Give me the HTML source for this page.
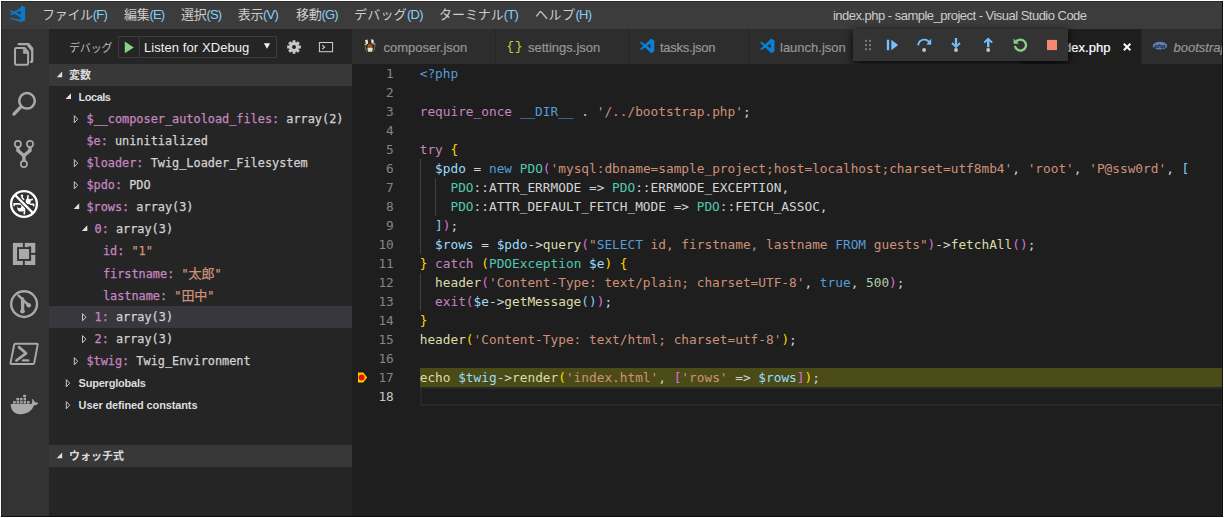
<!DOCTYPE html>
<html lang="ja">
<head>
<meta charset="utf-8">
<title>index.php - sample_project - Visual Studio Code</title>
<style>
*{box-sizing:border-box;margin:0;padding:0}
html,body{width:1224px;height:518px;overflow:hidden;background:#fff}
body{position:relative;font-family:"Liberation Sans","Noto Sans CJK JP",sans-serif;font-size:13px;color:#ccc;-webkit-font-smoothing:antialiased}
.abs{position:absolute}
#win{position:absolute;left:1px;top:1px;width:1222px;height:516px;background:#1e1e1e;overflow:hidden}
#edge-l{position:absolute;left:1px;top:1px;width:1px;height:516px;background:rgba(0,0,0,0.3)}
#edge-t{position:absolute;left:1px;top:1px;width:1222px;height:1px;background:rgba(0,0,0,0.3)}
#edge-r{position:absolute;left:1222px;top:1px;width:1px;height:516px;background:#0e0e0e}
#edge-b{position:absolute;left:1px;top:516px;width:1222px;height:1px;background:#0e0e0e}
/* title bar */
#title{position:absolute;left:0;top:0;width:1222px;height:28px;background:#3c3c3c}
#title .mi{position:absolute;top:0;height:28px;line-height:27px;font-size:13px;color:#ccc;white-space:nowrap}
#title .j{letter-spacing:-0.3px}#title .l{letter-spacing:-0.8px}
#wtitle{position:absolute;top:0.5px;height:28px;line-height:28px;font-size:13px;letter-spacing:-0.52px;color:#ccc;white-space:nowrap}
/* activity bar */
#act{position:absolute;left:0;top:28px;width:48px;height:488px;background:#333}
#act svg{position:absolute;left:0;top:0}
/* sidebar */
#side{position:absolute;left:48px;top:28px;width:303px;height:488px;background:#252526}
.shead{position:absolute;left:0;width:303px;height:22px;background:#383838;font-size:11px;font-weight:bold;color:#ddd;line-height:22px}
.row{position:absolute;left:0;width:303px;height:22px;line-height:22px;white-space:pre}
.row.sel{background:#37373d}
.mono{font-family:"DejaVu Sans Mono","Liberation Mono",monospace;font-size:11.86px;letter-spacing:0;-webkit-text-stroke:0.25px}
.row .t{position:absolute;top:0;height:22px;line-height:22px;white-space:pre}
.vn{color:#c586c0}.vv{color:#d2d2d2}.vs{color:#ce9178}
.cj{font-family:"Noto Sans CJK JP",sans-serif;font-size:13px;letter-spacing:-0.1px}
.bold{font-weight:bold;font-size:11px;color:#ddd;letter-spacing:-0.22px}
/* tabs */
#tabs{position:absolute;left:351px;top:28px;width:871px;height:35px;background:#252526}
.tab{position:absolute;top:0;height:35px;background:#2d2d2d;color:#969696;font-size:13px;line-height:35px;white-space:nowrap}
.tl{-webkit-text-stroke:0.2px;top:1px;height:35px;line-height:35px;font-size:13px;color:#969696;white-space:nowrap}
/* editor */
#ed{position:absolute;left:351px;top:63px;width:871px;height:453px;background:#1e1e1e}
.ln{position:absolute;left:0;width:41.8px;text-align:right;color:#858585}.ln.cur{color:#c6c6c6}
.cl{position:absolute;left:67.7px;white-space:pre;color:#d4d4d4}
.code{font-family:"DejaVu Sans Mono","Liberation Mono",monospace;font-size:12.79px;line-height:19px;height:19px}
.k{color:#c586c0}.b{color:#569cd6}.s{color:#ce9178}.v{color:#9cdcfe}.t{color:#4ec9b0}.f{color:#dcdcaa}.n{color:#b5cea8}.g{color:#ffd700}.o{color:#da70d6}.l{color:#87cefa}
</style>
</head>
<body>
<div id="win">
  <div id="title">
    <svg class="abs" style="left:7px;top:3px" width="20" height="20" viewBox="8 4 20 20"><g fill="#0a7ad0"><path d="M21.8 5.7 L25.1 7.3 V20.4 L21.5 22.1 L20.7 21.6 V6.5 Z"/><path d="M9.8 10.9 L10.9 9.9 L21 15.1 V17.7 Z"/><path d="M9.8 14.2 L10.9 15.2 L21 10.6 V7.8 Z"/><path d="M9.5 17.8 L20.9 19.6 L21.5 22.1 L10.2 18.7 Z"/></g></svg>
    <div class="mi" style="left:41px"><span class="j">ファイル</span><span class="l">(F)</span></div>
    <div class="mi" style="left:123px"><span class="j">編集</span><span class="l">(E)</span></div>
    <div class="mi" style="left:180px"><span class="j">選択</span><span class="l">(S)</span></div>
    <div class="mi" style="left:236.7px"><span class="j">表示</span><span class="l">(V)</span></div>
    <div class="mi" style="left:295px"><span class="j">移動</span><span class="l">(G)</span></div>
    <div class="mi" style="left:353px"><span class="j" style="letter-spacing:0.25px">デバッグ</span><span class="l">(D)</span></div>
    <div class="mi" style="left:438px"><span class="j" style="letter-spacing:-0.05px">ターミナル</span><span class="l">(T)</span></div>
    <div class="mi" style="left:534px"><span class="j" style="letter-spacing:0.5px">ヘルプ</span><span class="l">(H)</span></div>
    <div id="wtitle" style="left:832px">index.php - sample_project - Visual Studio Code</div>
  </div>
  <div id="act">
    <svg width="48" height="488" viewBox="1 29 48 488">
      <g fill="none" stroke="#a9a9a9" stroke-linecap="round" stroke-linejoin="round">
        <!-- files -->
        <path d="M18.6 44.1 H28.3 L32.2 48.6 V60.4 Q32.2 61.8 30.9 61.8" stroke-width="2.3"/>
        <path d="M16.4 48 H24.6 L28.1 52.2 V63.4 Q28.1 64.8 26.7 64.8 H16.4 Q15 64.8 15 63.4 V49.4 Q15 48 16.4 48 Z" stroke-width="2"/>
        <path d="M23.4 48.6 V53.4 H28 Z" fill="#a9a9a9" stroke-width="0.6"/>
        <path d="M28.6 44.6 L32 48.6 L31 50.4 L27.6 46 Z" fill="#a9a9a9" stroke-width="0.6"/>
        <!-- search -->
        <circle cx="27" cy="100.8" r="7.8" stroke-width="2.5"/>
        <path d="M20.9 106.9 L13.9 114.2" stroke-width="3.2"/>
        <!-- git -->
        <path d="M17.9 146 V150.4 L23.9 155.8 L30 150.4 V146 M23.9 155.8 V162" stroke-width="3.4" stroke-linecap="butt" stroke-linejoin="miter"/>
        <circle cx="17.9" cy="143.9" r="3.1" stroke-width="1.7" fill="#333"/>
        <circle cx="30" cy="143.9" r="3.1" stroke-width="1.7" fill="#333"/>
        <circle cx="23.9" cy="164" r="3.1" stroke-width="1.7" fill="#333"/>
        <!-- gitlens -->
        <circle cx="24.1" cy="304.1" r="12.9" stroke-width="2.4"/>
        <path d="M18.6 295.6 L22.3 299.2 M22.8 299.8 L28.6 305.2" stroke-width="2.5"/>
        <path d="M22.6 299 V311" stroke-width="3.3"/>
        <circle cx="22.5" cy="311.2" r="2.3" fill="#a9a9a9" stroke="none"/>
        <circle cx="28.7" cy="305.3" r="2.3" fill="#a9a9a9" stroke="none"/>
        <!-- powershell -->
        <path d="M15.4 343.7 H36.9 Q37.9 343.7 37.7 344.7 L34.2 363 Q34 364 33 364 H11.3 Q10.3 364 10.5 363 L14.2 344.7 Q14.4 343.7 15.4 343.7 Z" stroke-width="1.9"/>
        <path d="M19.1 347.2 L26 353.3 L16.4 360.5" stroke-width="2.8"/>
        <path d="M23 360.4 H28.2" stroke-width="2.4"/>
      </g>
      <!-- extensions -->
      <g>
        <rect x="12.9" y="242.9" width="22.4" height="22.1" fill="#a9a9a9"/>
        <rect x="17.1" y="247.1" width="14" height="13.8" fill="#333"/>
        <rect x="19" y="249" width="10.1" height="10" fill="#a9a9a9"/>
        <rect x="22.9" y="242" width="1.9" height="5.2" fill="#333"/>
        <rect x="22.9" y="260.8" width="1.9" height="5" fill="#333"/>
        <rect x="31" y="252.9" width="5" height="1.9" fill="#333"/>
        <rect x="28.3" y="246.4" width="2.8" height="2.9" fill="#333"/>
      </g>
      <!-- docker -->
      <g fill="#a9a9a9">
        <path d="M10.8 404 H31.4 C32.5 402.5 32.4 400.5 31.9 398.7 C33.5 399.7 34.7 401.1 34.9 402.6 C36 402.1 37.3 402.3 38.1 402.9 C37.6 404.5 36 405.4 34 405.3 C32 410.6 27.5 414.2 20.3 414.2 C14 414.2 10.5 410 10.8 404 Z"/>
        <rect x="13.1" y="401.1" width="2.6" height="2.5"/><rect x="16.7" y="401.1" width="2.5" height="2.5"/><rect x="20.2" y="401.1" width="2.4" height="2.5"/><rect x="23.6" y="401.1" width="2.4" height="2.5"/><rect x="27" y="401.1" width="2.6" height="2.5"/>
        <rect x="16.4" y="397.9" width="2.7" height="2.5"/><rect x="20" y="397.9" width="2.5" height="2.5"/><rect x="23.6" y="397.9" width="2.4" height="2.5"/>
        <rect x="23.2" y="394.8" width="2.8" height="2.4"/>
      </g>
      <!-- debug (active) -->
      <g fill="none" stroke="#fff" stroke-linecap="round" stroke-linejoin="round">
        <circle cx="21" cy="207.9" r="3.7" fill="#fff" stroke="none"/>
        <circle cx="19.4" cy="206.3" r="1.9" fill="#333" stroke="none"/>
        <ellipse cx="28.2" cy="201.4" rx="2.5" ry="2.8" fill="#fff" stroke="none"/>
        <path d="M14 203.9 H20.4 M14.2 204 V205.4 M22.2 195.4 V198.2 L23.6 199.4 M21.4 195.6 H22.4 M28 195.8 L27.6 198.6 M30.4 200 L32.2 199.4 M30.4 204.3 H33.6 V205.8 M24.5 208.6 L24.3 213.8" stroke-width="1.6"/>
        <path d="M14.9 194.9 L33.1 213.1" stroke="#333" stroke-width="4.4" stroke-linecap="butt"/>
        <path d="M14.9 194.9 L33.1 213.1" stroke-width="2.2" stroke-linecap="butt"/>
        <circle cx="24" cy="204" r="12.9" stroke-width="2.3"/>
      </g>
    </svg>
  </div>
  <div id="side">
    <div class="abs" style="left:20px;top:1.5px;height:35px;line-height:35px;font-size:11px;letter-spacing:-0.15px;color:#bbb;white-space:nowrap">デバッグ</div>
    <div class="abs" style="left:69px;top:7px;width:159px;height:22px;border:1px solid #3c3c3c"></div>
    <div class="abs" style="left:90px;top:8px;width:1px;height:20px;background:#3c3c3c"></div>
    <div class="abs" id="cfg" style="left:95px;top:1px;letter-spacing:0.08px;height:35px;line-height:35px;font-size:13px;color:#f0f0f0;white-space:nowrap">Listen for XDebug</div>
    <div class="shead" style="top:35px"><span class="abs" style="left:20px">変数</span></div>
    <div class="row" style="top:57px"><div class="t" style="left:29.6px"><span class="bold" style="letter-spacing:-0.5px">Locals</span></div></div>
    <div class="row" style="top:79px"><div class="t" style="left:37.4px"><span class="mono"><span class="vn">$__composer_autoload_files:</span><span class="vv"> array(2)</span></span></div></div>
    <div class="row" style="top:101px"><div class="t" style="left:37.4px"><span class="mono"><span class="vn">$e:</span><span class="vv"> uninitialized</span></span></div></div>
    <div class="row" style="top:123px"><div class="t" style="left:37.4px"><span class="mono"><span class="vn">$loader:</span><span class="vv"> Twig_Loader_Filesystem</span></span></div></div>
    <div class="row" style="top:145px"><div class="t" style="left:37.4px"><span class="mono"><span class="vn">$pdo:</span><span class="vv"> PDO</span></span></div></div>
    <div class="row" style="top:167px"><div class="t" style="left:37.4px"><span class="mono"><span class="vn">$rows:</span><span class="vv"> array(3)</span></span></div></div>
    <div class="row" style="top:189px"><div class="t" style="left:45.5px"><span class="mono"><span class="vn">0:</span><span class="vv"> array(3)</span></span></div></div>
    <div class="row" style="top:211px"><div class="t" style="left:53.9px"><span class="mono"><span class="vn">id:</span><span class="vs"> "1"</span></span></div></div>
    <div class="row" style="top:233px"><div class="t" style="left:53.9px"><span class="mono"><span class="vn">firstname:</span><span class="vs"> "<span class="cj">太郎</span>"</span></span></div></div>
    <div class="row" style="top:255px"><div class="t" style="left:53.9px"><span class="mono"><span class="vn">lastname:</span><span class="vs"> "<span class="cj">田中</span>"</span></span></div></div>
    <div class="row sel" style="top:277px"><div class="t" style="left:45.5px"><span class="mono"><span class="vn">1:</span><span class="vv"> array(3)</span></span></div></div>
    <div class="row" style="top:299px"><div class="t" style="left:45.5px"><span class="mono"><span class="vn">2:</span><span class="vv"> array(3)</span></span></div></div>
    <div class="row" style="top:321px"><div class="t" style="left:37.4px"><span class="mono"><span class="vn">$twig:</span><span class="vv"> Twig_Environment</span></span></div></div>
    <div class="row" style="top:343px"><div class="t" style="left:29.6px"><span class="bold">Superglobals</span></div></div>
    <div class="row" style="top:365px"><div class="t" style="left:29.6px"><span class="bold" style="letter-spacing:-0.13px">User defined constants</span></div></div>
    <div class="shead" style="top:416px"><span class="abs" style="left:20px">ウォッチ式</span></div>
    <svg class="abs" style="left:0;top:0;pointer-events:none" width="303" height="488" viewBox="49 29 303 488">
    <path d="M124.8 41.5 L133.8 47.4 L124.8 53.2 Z" fill="#89d185"/>
    <path d="M263.9 43.2 H270.1 L267 48.7 Z" fill="#f0f0f0"/>
    <path d="M292.52 42.22 L292.61 40.14 L295.39 40.14 L295.48 42.22 L296.33 42.58 L297.87 41.17 L299.83 43.13 L298.42 44.67 L298.78 45.52 L300.86 45.61 L300.86 48.39 L298.78 48.48 L298.42 49.33 L299.83 50.87 L297.87 52.83 L296.33 51.42 L295.48 51.78 L295.39 53.86 L292.61 53.86 L292.52 51.78 L291.67 51.42 L290.13 52.83 L288.17 50.87 L289.58 49.33 L289.22 48.48 L287.14 48.39 L287.14 45.61 L289.22 45.52 L289.58 44.67 L288.17 43.13 L290.13 41.17 L291.67 42.58 Z M292.00 47.00 a2 2 0 1 0 4 0 a2 2 0 1 0 -4 0 Z" fill="#c8c8c8" fill-rule="evenodd"/>
    <rect x="319.4" y="42.5" width="13.2" height="9.2" fill="none" stroke="#d0d0d0" stroke-width="1"/>
    <path d="M322.2 45.2 L324.6 47.2 L322.2 49.2" fill="none" stroke="#d0d0d0" stroke-width="1.1"/>
    <path d="M62.2 71.6 V77.2 H56.7 Z" fill="#e0e0e0"/>
    <path d="M62.2 452.6 V458.2 H56.7 Z" fill="#e0e0e0"/>
    <path d="M71.0 93.3 V98.9 H65.5 Z" fill="#e0e0e0"/>
    <path d="M74.3 115.6 L77.7 119.2 L74.3 122.8 Z" fill="none" stroke="#c8c8c8" stroke-width="1"/>
    <path d="M74.3 159.6 L77.7 163.2 L74.3 166.8 Z" fill="none" stroke="#c8c8c8" stroke-width="1"/>
    <path d="M74.3 181.6 L77.7 185.2 L74.3 188.8 Z" fill="none" stroke="#c8c8c8" stroke-width="1"/>
    <path d="M79.2 203.3 V208.9 H73.7 Z" fill="#e0e0e0"/>
    <path d="M87.3 225.3 V230.9 H81.8 Z" fill="#e0e0e0"/>
    <path d="M82.5 313.6 L85.9 317.2 L82.5 320.8 Z" fill="none" stroke="#c8c8c8" stroke-width="1"/>
    <path d="M82.5 335.6 L85.9 339.2 L82.5 342.8 Z" fill="none" stroke="#c8c8c8" stroke-width="1"/>
    <path d="M74.3 357.6 L77.7 361.2 L74.3 364.8 Z" fill="none" stroke="#c8c8c8" stroke-width="1"/>
    <path d="M66.3 379.6 L69.7 383.2 L66.3 386.8 Z" fill="none" stroke="#c8c8c8" stroke-width="1"/>
    <path d="M66.3 401.6 L69.7 405.2 L66.3 408.8 Z" fill="none" stroke="#c8c8c8" stroke-width="1"/>
    </svg>
  </div>
  <div id="tabs">
    <div class="tab" style="left:0px;width:143px;background:#2d2d2d"></div>
    <div class="tab" style="left:144px;width:132px;background:#2d2d2d"></div>
    <div class="tab" style="left:277px;width:119px;background:#2d2d2d"></div>
    <div class="tab" style="left:397px;width:128px;background:#2d2d2d"></div>
    <div class="tab" style="left:526px;width:142px;background:#2d2d2d"></div>
    <div class="tab" style="left:669px;width:119.6px;background:#1e1e1e"></div>
    <div class="tab" style="left:789.6px;width:90px;background:#2d2d2d"></div>
    <div class="abs tl" style="left:31.5px;">composer.json</div>
    <div class="abs tl" style="left:176.0px;">settings.json</div>
    <div class="abs tl" style="left:308.0px;letter-spacing:-0.25px">tasks.json</div>
    <div class="abs tl" style="left:428.0px;">launch.json</div>
    <div class="abs tl" style="left:702.0px;color:#fff">index.php</div>
    <div class="abs tl" style="left:821.5px;font-style:italic">bootstrap.php</div>
    <div class="abs tl" style="left:154.3px;color:#cbcb41;font-family:'Liberation Mono',monospace;font-size:13px;letter-spacing:0.6px;top:0px;-webkit-text-stroke:0">{}</div>
    <svg class="abs" style="left:0;top:0" width="871" height="35" viewBox="352 29 871 35">
    <g><path d="M365 40.2 L367.6 39.6 L368.2 43.6 L366 44.4 Z" fill="#efe4d0"/><path d="M371 39.2 L373.6 39.8 L373.8 43.4 L371.6 43.6 Z" fill="#efe4d0"/><path d="M365.4 44.6 Q364.6 49 366.8 51.6 M374.8 44.2 Q375.4 48.6 373.2 51.4" fill="none" stroke="#7a5a2c" stroke-width="1.1"/><ellipse cx="369.9" cy="46" rx="2.6" ry="1.9" fill="#a4551e"/><path d="M367.4 47.8 H372.8 L372.2 51.8 H368 Z" fill="#e6e0d4"/><path d="M364.6 44.4 H366.6 M373.4 44 H375.4" stroke="#c8d0d8" stroke-width="1"/></g>
    <g transform="translate(640 38.8)" fill="#0a7fd4"><path d="M10.5 0.3 L11.4 0 L14.3 1.6 V12.6 L11.4 14.2 L10.5 13.9 Z"/><path d="M0 3.9 L1.2 2.8 L10.7 9.7 H12 V13.5 L10.7 13.9 Z"/><path d="M0 10.2 L1.2 11.3 L10.7 4.7 H12 V0.7 L10.7 0.3 Z"/></g>
    <g transform="translate(760.2 38.8)" fill="#0a7fd4"><path d="M10.5 0.3 L11.4 0 L14.3 1.6 V12.6 L11.4 14.2 L10.5 13.9 Z"/><path d="M0 3.9 L1.2 2.8 L10.7 9.7 H12 V13.5 L10.7 13.9 Z"/><path d="M0 10.2 L1.2 11.3 L10.7 4.7 H12 V0.7 L10.7 0.3 Z"/></g>
    <ellipse cx="1160" cy="45.7" rx="7.2" ry="3.9" fill="#6181b6"/>
    <text x="1159.8" y="47.7" font-family="Liberation Sans, sans-serif" font-size="6.2" font-weight="bold" font-style="italic" text-anchor="middle" fill="#1c1c30">php</text>
    <path d="M1123.8 43.7 L1130.4 50.2 M1130.4 43.7 L1123.8 50.2" stroke="#fff" stroke-width="1.9" fill="none"/>
    </svg>
    <div id="dbg" class="abs" style="left:501px;top:0;width:215px;height:32px;background:#333;box-shadow:0 2px 8px rgba(0,0,0,0.95)">
    <svg class="abs" style="left:0;top:0" width="215" height="32" viewBox="853 29 215 32">
    <rect x="865" y="39.9" width="2" height="2" fill="#7c7c7c"/><rect x="869" y="39.9" width="2" height="2" fill="#7c7c7c"/><rect x="865" y="44.1" width="2" height="2" fill="#7c7c7c"/><rect x="869" y="44.1" width="2" height="2" fill="#7c7c7c"/><rect x="865" y="48.2" width="2" height="2" fill="#7c7c7c"/><rect x="869" y="48.2" width="2" height="2" fill="#7c7c7c"/>
    <rect x="886.8" y="39.7" width="2.4" height="10.5" fill="#75beff"/><path d="M891.3 39.7 L898.2 44.95 L891.3 50.2 Z" fill="#75beff"/>
    <path d="M918 45.2 Q919.4 39.4 924.4 39.6 Q928.4 39.8 930 43.6" fill="none" stroke="#75beff" stroke-width="1.9"/><path d="M926.4 44.6 L931.2 44.8 L931.2 38.6 Z" fill="#75beff"/><circle cx="924.1" cy="50" r="1.9" fill="#c8c8c8"/>
    <path d="M956 38 V45.4" stroke="#75beff" stroke-width="2.3" fill="none"/><path d="M952 43 L956 47 L960 43" fill="none" stroke="#75beff" stroke-width="1.9"/><circle cx="956" cy="50" r="1.9" fill="#c8c8c8"/>
    <path d="M988.2 39.6 V47.2" stroke="#75beff" stroke-width="2.4" fill="none"/><path d="M984.2 42.6 L988.2 38.8 L992.2 42.6" fill="none" stroke="#75beff" stroke-width="1.9"/><circle cx="988.2" cy="50" r="1.9" fill="#c8c8c8"/>
    <path d="M1016.2 41.6 A5.5 5.5 0 1 1 1015 45.8" fill="none" stroke="#89d185" stroke-width="2.3"/><path d="M1013.6 38.6 V43.8 H1018.8 Z" fill="#89d185"/>
    <rect x="1047" y="39.9" width="10" height="10.2" fill="#f48771"/>
    </svg>
    </div>
    </div>
  <div id="ed">
    <div class="abs" style="left:68px;top:304px;width:803px;height:19px;background:#4b4b18"></div>
    <div class="abs" style="left:68px;top:323px;width:805px;height:19px;border:2px solid #282828"></div>
    <div class="abs" style="left:68px;top:95px;width:1px;height:95px;background:#404040"></div>
    <div class="abs" style="left:68px;top:209px;width:1px;height:38px;background:#404040"></div>
    <div class="abs" style="left:83px;top:114px;width:1px;height:38px;background:#404040"></div>
    <svg class="abs" style="left:0;top:300px" width="30" height="24" viewBox="352 364 30 24"><path d="M358 372.6 H363.2 L367.2 377.5 L363.2 382.4 H358 Z" fill="#ffcc00"/><circle cx="361.6" cy="377.5" r="3" fill="#e51400"/></svg>
    <div class="ln code" style="top:0px">1</div>
    <div class="cl code" style="top:0px"><span class="b">&lt;?php</span></div>
    <div class="ln code" style="top:19px">2</div>
    <div class="ln code" style="top:38px">3</div>
    <div class="cl code" style="top:38px"><span class="k">require_once</span> <span class="b">__DIR__</span> . <span class="s">'/../bootstrap.php'</span>;</div>
    <div class="ln code" style="top:57px">4</div>
    <div class="ln code" style="top:76px">5</div>
    <div class="cl code" style="top:76px"><span class="k">try</span> <span class="g">{</span></div>
    <div class="ln code" style="top:95px">6</div>
    <div class="cl code" style="top:95px">  <span class="v">$pdo</span> = <span class="b">new</span> <span class="t">PDO</span><span class="o">(</span><span class="s">'mysql:dbname=sample_project;host=localhost;charset=utf8mb4'</span>, <span class="s">'root'</span>, <span class="s">'P@ssw0rd'</span>, <span class="l">[</span></div>
    <div class="ln code" style="top:114px">7</div>
    <div class="cl code" style="top:114px">    <span class="t">PDO</span>::ATTR_ERRMODE =&gt; <span class="t">PDO</span>::ERRMODE_EXCEPTION,</div>
    <div class="ln code" style="top:133px">8</div>
    <div class="cl code" style="top:133px">    <span class="t">PDO</span>::ATTR_DEFAULT_FETCH_MODE =&gt; <span class="t">PDO</span>::FETCH_ASSOC,</div>
    <div class="ln code" style="top:152px">9</div>
    <div class="cl code" style="top:152px">  <span class="l">]</span><span class="o">)</span>;</div>
    <div class="ln code" style="top:171px">10</div>
    <div class="cl code" style="top:171px">  <span class="v">$rows</span> = <span class="v">$pdo</span>-&gt;<span class="f">query</span><span class="o">(</span><span class="s">"</span><span class="b">SELECT</span><span class="s"> id, firstname, lastname </span><span class="b">FROM</span><span class="s"> guests"</span><span class="o">)</span>-&gt;<span class="f">fetchAll</span><span class="o">()</span>;</div>
    <div class="ln code" style="top:190px">11</div>
    <div class="cl code" style="top:190px"><span class="g">}</span> <span class="k">catch</span> <span class="g">(</span><span class="t">PDOException</span> <span class="v">$e</span><span class="g">)</span> <span class="g">{</span></div>
    <div class="ln code" style="top:209px">12</div>
    <div class="cl code" style="top:209px">  <span class="f">header</span><span class="o">(</span><span class="s">'Content-Type: text/plain; charset=UTF-8'</span>, <span class="b">true</span>, <span class="n">500</span><span class="o">)</span>;</div>
    <div class="ln code" style="top:228px">13</div>
    <div class="cl code" style="top:228px">  <span class="k">exit</span><span class="o">(</span><span class="v">$e</span>-&gt;<span class="f">getMessage</span><span class="l">()</span><span class="o">)</span>;</div>
    <div class="ln code" style="top:247px">14</div>
    <div class="cl code" style="top:247px"><span class="g">}</span></div>
    <div class="ln code" style="top:266px">15</div>
    <div class="cl code" style="top:266px"><span class="f">header</span><span class="g">(</span><span class="s">'Content-Type: text/html; charset=utf-8'</span><span class="g">)</span>;</div>
    <div class="ln code" style="top:285px">16</div>
    <div class="ln code" style="top:304px">17</div>
    <div class="cl code" style="top:304px"><span class="f">echo</span> <span class="v">$twig</span>-&gt;<span class="f">render</span><span class="g">(</span><span class="s">'index.html'</span>, <span class="o">[</span><span class="s">'rows'</span> =&gt; <span class="v">$rows</span><span class="o">]</span><span class="g">)</span>;</div>
    <div class="ln code cur" style="top:323px">18</div>
  </div>
</div>
<div id="edge-l"></div>
<div id="edge-t"></div>
<div id="edge-r"></div>
<div id="edge-b"></div>
</body>
</html>
